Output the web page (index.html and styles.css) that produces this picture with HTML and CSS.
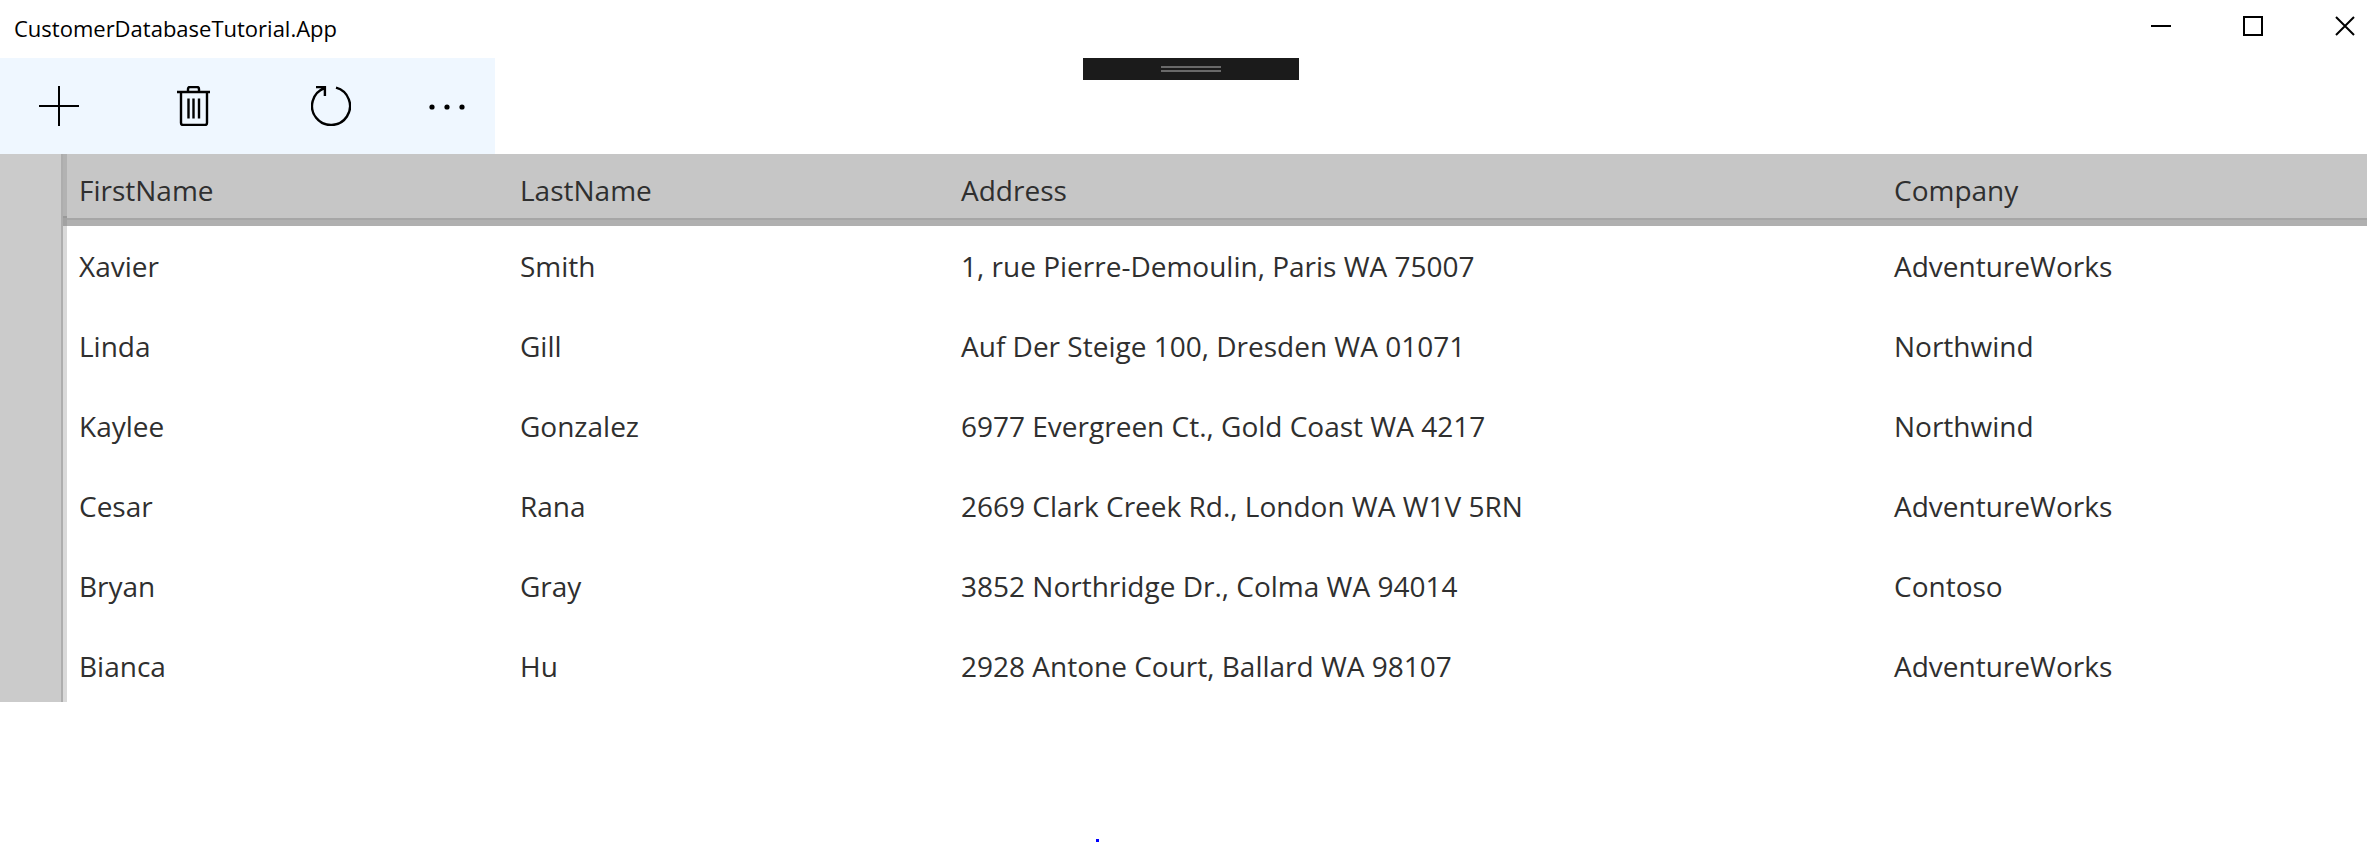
FILE: index.html
```html
<!DOCTYPE html>
<html lang="en">
<head>
<meta charset="utf-8">
<title>CustomerDatabaseTutorial.App</title>
<link rel="stylesheet" href="styles.css">
</head>
<body>
<header class="titlebar">
  <h1 class="title">CustomerDatabaseTutorial.App</h1>
  <div class="window-controls">
    <button class="icon-button" type="button" aria-label="Minimize"><svg width="20" height="20" viewBox="0 0 20 20"><path d="M0 10h20"/></svg></button>
    <button class="icon-button" type="button" aria-label="Maximize"><svg width="20" height="20" viewBox="0 0 20 20"><path d="M1 1h18v18H1z"/></svg></button>
    <button class="icon-button" type="button" aria-label="Close"><svg width="20" height="20" viewBox="0 0 20 20"><path d="M1 1l18 18M19 1L1 19"/></svg></button>
  </div>
</header>
<div class="debug-bar"><span class="grip"></span></div>
<nav class="commands" aria-label="Commands">
  <button class="icon-button" type="button" aria-label="Add"><svg width="40" height="40" viewBox="0 0 40 40"><path d="M0 20h40M20 0v40"/></svg></button>
  <button class="icon-button bold" type="button" aria-label="Delete"><svg width="40" height="40" viewBox="0 0 40 40"><path d="M2 6h33M13 6V3q0-2 2-2h7q2 0 2 2v3M6 6v31q0 2 2 2h22q2 0 2-2V6M13.500 12.500v20M18.500 12.500v20M24 12.500v20"/></svg></button>
  <button class="icon-button bold" type="button" aria-label="Refresh"><svg width="40" height="40" viewBox="0 0 40 40"><path d="M25 1.700A19 19 0 1 1 13.500 2.200M5 1.100h8.900v8.900"/></svg></button>
  <button class="icon-button more" type="button" aria-label="More"><svg width="40" height="40" viewBox="0 0 40 40"><g class="dots"><circle cx="5" cy="21" r="2.600"/><circle cx="20" cy="21" r="2.600"/><circle cx="35" cy="21" r="2.600"/></g></svg></button>
</nav>
<main class="content">
  <table class="grid">
    <colgroup><col class="col-gutter"><col class="col-name"><col class="col-name"><col class="col-address"><col></colgroup>
    <thead>
      <tr><td class="gutter"></td><th scope="col">FirstName</th><th scope="col">LastName</th><th scope="col">Address</th><th scope="col">Company</th></tr>
    </thead>
    <tbody>
      <tr><td class="gutter"></td><td>Xavier</td><td>Smith</td><td>1, rue Pierre-Demoulin, Paris WA 75007</td><td>AdventureWorks</td></tr>
      <tr><td class="gutter"></td><td>Linda</td><td>Gill</td><td>Auf Der Steige 100, Dresden WA 01071</td><td>Northwind</td></tr>
      <tr><td class="gutter"></td><td>Kaylee</td><td>Gonzalez</td><td>6977 Evergreen Ct., Gold Coast WA 4217</td><td>Northwind</td></tr>
      <tr><td class="gutter"></td><td>Cesar</td><td>Rana</td><td>2669 Clark Creek Rd., London WA W1V 5RN</td><td>AdventureWorks</td></tr>
      <tr><td class="gutter"></td><td>Bryan</td><td>Gray</td><td>3852 Northridge Dr., Colma WA 94014</td><td>Contoso</td></tr>
      <tr><td class="gutter"></td><td>Bianca</td><td>Hu</td><td>2928 Antone Court, Ballard WA 98107</td><td>AdventureWorks</td></tr>
    </tbody>
  </table>
  <span class="marker"></span>
</main>
</body>
</html>
```
FILE: styles.css
```css
* { box-sizing: border-box; }
body {
  margin: 0;
  min-height: 100vh;
  display: flex;
  flex-direction: column;
  position: relative;
  background: #fff;
  color: #2f2f2f;
  font-family: "Segoe UI", "Open Sans", "Noto Sans", sans-serif;
  font-size: 28px;
  line-height: 40px;
}
.titlebar {
  display: flex;
  justify-content: space-between;
  align-items: flex-start;
  height: 58px;
  padding: 16px 12px 0 14px;
}
.title {
  margin: 0;
  font-size: 22px;
  line-height: 24px;
  font-weight: 400;
  color: #000;
}
.window-controls { display: flex; gap: 72px; }
.icon-button {
  display: flex;
  align-items: center;
  justify-content: center;
  padding: 0;
  border: 0;
  background: none;
  color: #000;
}
.icon-button svg {
  display: block;
  fill: none;
  stroke: currentColor;
  stroke-width: 2;
}
.bold svg { stroke-width: 2.4; }
.icon-button .dots { fill: currentColor; stroke: none; }
.debug-bar {
  position: absolute;
  top: 58px;
  left: 1083px;
  width: 216px;
  height: 22px;
  display: flex;
  justify-content: center;
  padding-top: 8px;
  background: #1b1b1b;
}
.grip {
  width: 60px;
  height: 6px;
  border: solid #696969;
  border-width: 2px 0;
}
.commands {
  display: flex;
  align-items: center;
  align-self: flex-start;
  gap: 96px;
  height: 96px;
  padding-left: 39px;
  background: #eff7ff;
}
.more { width: 96px; margin-left: -48px; }
.content { flex: 1; position: relative; }
.grid {
  width: 100%;
  table-layout: fixed;
  border-collapse: separate;
  border-spacing: 0;
}
.col-gutter { width: 67px; }
.col-name { width: 441px; }
.col-address { width: 933px; }
.grid th, .grid td {
  height: 80px;
  padding: 8px 12px 0;
  text-align: left;
  font-weight: 400;
  white-space: nowrap;
}
.grid thead th, .grid thead td { height: 68px; padding-top: 4px; }
.grid th {
  position: relative;
  background: #c6c6c6;
  box-shadow: inset 0 -2px #b0b0b0, inset 0 -4px #a6a6a6, 0 4px #b0b0b0;
}
.grid .gutter {
  padding: 0;
  background: linear-gradient(to right, #cbcbcb 61px, #adadad 61px, #adadad 63px, #d9d9d9 63px);
}
.grid thead .gutter {
  position: relative;
  background: linear-gradient(to right, #cbcbcb 61px, #adadad 61px, #adadad 63px, #b2b2b2 63px);
}
.grid thead .gutter::after {
  content: "";
  position: absolute;
  right: 0;
  bottom: -4px;
  width: 4px;
  height: 8px;
  border-top: 2px solid #999;
  background: #a2a2a2;
}
.marker {
  position: absolute;
  left: 1096px;
  bottom: 0;
  width: 3px;
  height: 3px;
  background: #00f;
}
```
